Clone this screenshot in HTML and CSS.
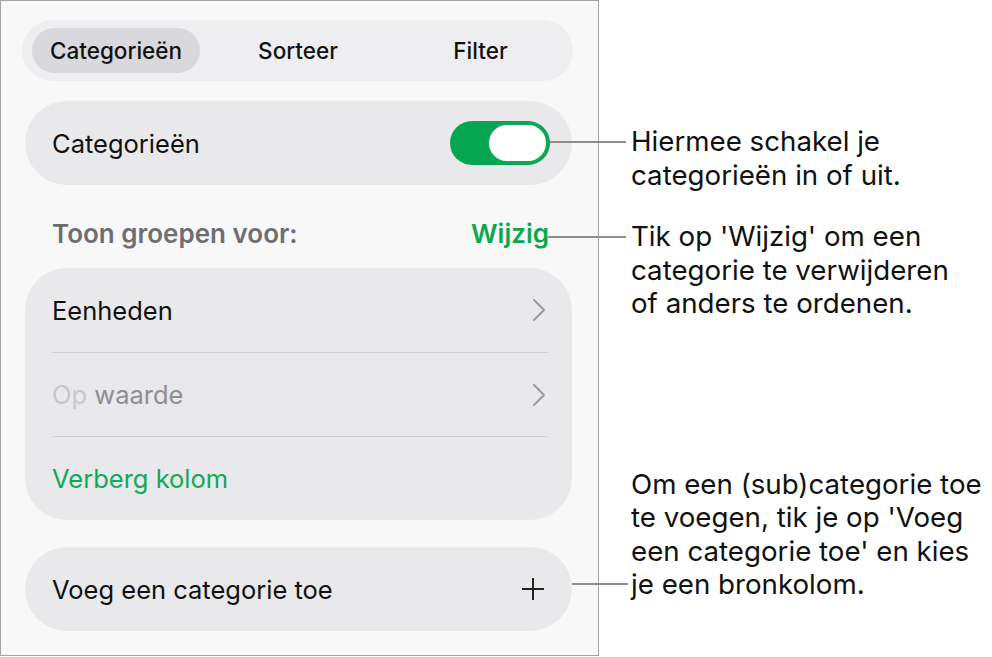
FILE: index.html
```html
<!DOCTYPE html>
<html lang="nl">
<head>
    <meta charset="UTF-8">
    <meta name="viewport" content="width=device-width, initial-scale=1.0">
    <title>Categorieën</title>
    <link rel="stylesheet" href="styles.css">
</head>
<body>
    <div class="stage">
        <div class="panel">
            <div class="segments">
                <span class="segment active">Categorieën</span>
                <span class="segment">Sorteer</span>
                <span class="segment">Filter</span>
            </div>

            <div class="card row">
                <span>Categorieën</span>
                <span class="toggle"><span class="knob"></span></span>
            </div>

            <div class="section-head">
                <span>Toon groepen voor:</span>
                <span class="link">Wijzig</span>
            </div>

            <div class="card group">
                <div class="row">
                    <span>Eenheden</span>
                    <svg class="chevron" width="14" height="24" viewBox="0 0 14 24"><path d="M2 2l10 10-10 10" fill="none" stroke="currentColor" stroke-width="1.8" stroke-linecap="round" stroke-linejoin="round"/></svg>
                </div>
                <div class="row muted">
                    <span><span class="faint">Op</span> waarde</span>
                    <svg class="chevron" width="14" height="24" viewBox="0 0 14 24"><path d="M2 2l10 10-10 10" fill="none" stroke="currentColor" stroke-width="1.8" stroke-linecap="round" stroke-linejoin="round"/></svg>
                </div>
                <div class="row green">
                    <span>Verberg kolom</span>
                </div>
            </div>

            <div class="card row add">
                <span>Voeg een categorie toe</span>
                <svg class="plus" width="24" height="24" viewBox="0 0 24 24"><path d="M12 1v22M1 12h22" fill="none" stroke="currentColor" stroke-width="2"/></svg>
            </div>
        </div>

        <div class="notes">
            <p class="note note-toggle">Hiermee schakel je<br>categorieën in of uit.</p>
            <p class="note note-edit">Tik op 'Wijzig' om een<br>categorie te verwijderen<br>of anders te ordenen.</p>
            <p class="note note-add">Om een (sub)categorie toe<br>te voegen, tik je op 'Voeg<br>een categorie toe' en kies<br><span class="lead-last">je een bronkolom.</span></p>
        </div>
    </div>
</body>
</html>
```

FILE: styles.css
```css
* {
    margin: 0;
    padding: 0;
    box-sizing: border-box;
}

body {
    background: #ffffff;
    font-family: Inter, "Noto Sans", sans-serif;
    color: #111;
}

.stage {
    display: flex;
    width: 992px;
    height: 657px;
}

/* Left panel */
.panel {
    width: 599px;
    height: 656px;
    border: 1px solid #a3a3a3;
    background: #f8f8f9;
    padding: 19px 25px 0 21px;
    display: flex;
    flex-direction: column;
}

.segments {
    display: grid;
    grid-template-columns: 168px 196px 1fr;
    height: 61px;
    padding: 8px 8px 8px 10px;
    border-radius: 31px;
    background: #eeeef0;
    font-size: 22.5px;
    font-weight: 500;
}

.segment {
    display: flex;
    align-items: center;
    justify-content: center;
    border-radius: 23px;
}

.segment.active {
    background: #d9d9dd;
}

.card {
    background: #e9e9eb;
    margin-left: 3px;
    width: 547px;
}

.row {
    display: flex;
    align-items: center;
    justify-content: space-between;
    height: 84px;
    padding: 0 22px 0 27px;
    font-size: 25.5px;
}

.card.row {
    border-radius: 42px;
    margin-top: 20px;
}

.toggle {
    width: 100px;
    height: 44px;
    border-radius: 22px;
    background: #05a64f;
    display: flex;
    justify-content: flex-end;
    align-items: center;
    padding-right: 2px;
}

.knob {
    width: 61px;
    height: 40px;
    border-radius: 20px;
    background: #fff;
    border: 2px solid #13a857;
}

.section-head {
    display: flex;
    justify-content: space-between;
    align-items: center;
    height: 83px;
    padding: 33px 24px 18px 30px;
    line-height: 32px;
    font-size: 26px;
    font-weight: 600;
    color: #6e6e72;
}

.link {
    color: #0ba751;
}

.group {
    border-radius: 42px;
}

.group .row {
    padding: 0;
    margin: 0 24px 0 27px;
}

.group .row + .row {
    border-top: 1px solid #d2d2d5;
}

.chevron {
    color: #98989d;
    margin-right: 2px;
}

.muted {
    color: #8e8e93;
}

.faint {
    color: #c6c6cb;
}

.green {
    color: #13a857;
}

.card.add {
    margin-top: 27px;
}

.plus {
    color: #222;
    margin-right: 5px;
}

/* Callouts on the right */
.notes {
    flex: 1;
    padding-left: 32px;
    font-size: 27.7px;
    line-height: 33.5px;
    color: #111;
}

.note {
    position: relative;
}

.note::before,
.lead-last::before {
    content: "";
    position: absolute;
    top: 16px;
    height: 2px;
    background: #8d8d8d;
}

.note-toggle {
    margin-top: 125px;
}

.note-toggle::before {
    left: -81px;
    width: 76px;
}

.note-edit {
    margin-top: 28px;
}

.note-edit::before {
    left: -83px;
    width: 78px;
}

.note-add {
    margin-top: 147px;
}

.note-add::before {
    display: none;
}

.lead-last {
    position: relative;
}

.lead-last::before {
    left: -59px;
    width: 56px;
}
```
